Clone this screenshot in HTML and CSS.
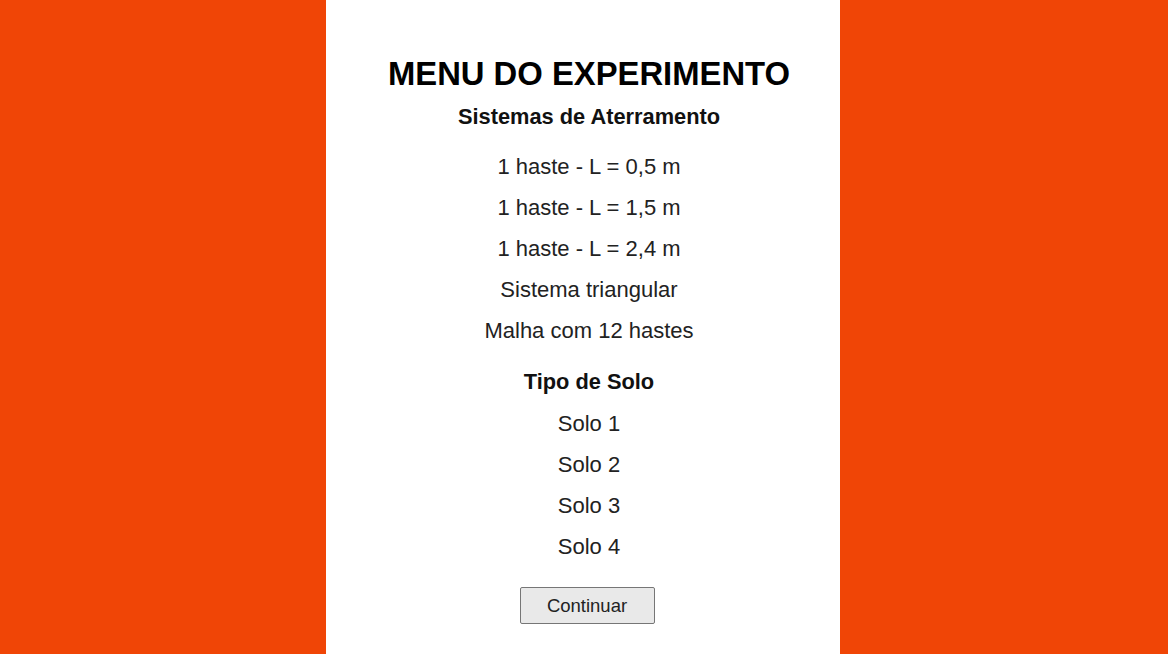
FILE: index.html
```html
<!DOCTYPE html>
<html lang="pt">
<head>
    <meta charset="UTF-8">
    <meta name="viewport" content="width=device-width, initial-scale=1.0">
    <title>Menu do Experimento</title>
    <link rel="stylesheet" href="styles.css">
</head>
<body>
    <div class="menu">
        <h1>MENU DO EXPERIMENTO</h1>
        <h2>Sistemas de Aterramento</h2>
        <ul class="options">
            <li>1 haste - L = 0,5 m</li>
            <li>1 haste - L = 1,5 m</li>
            <li>1 haste - L = 2,4 m</li>
            <li>Sistema triangular</li>
            <li>Malha com 12 hastes</li>
        </ul>
        <h2 class="solo-title">Tipo de Solo</h2>
        <ul class="options solos">
            <li>Solo 1</li>
            <li>Solo 2</li>
            <li>Solo 3</li>
            <li>Solo 4</li>
        </ul>
        <button class="continue">Continuar</button>
    </div>
</body>
</html>
```

FILE: styles.css
```css
body {
    margin: 0;
    background: #f04506;
    font-family: 'Liberation Sans', Arial, sans-serif;
    min-height: 100vh;
}
.menu {
    width: 514px;
    margin-left: calc(50% - 258px);
    background: #fff;
    min-height: 100vh;
    box-sizing: border-box;
    padding-top: 54px;
    padding-left: 12px; /* conteudo levemente deslocado para a direita */
    display: flex;
    flex-direction: column;
    align-items: center;
    text-align: center;
}
h1 {
    margin: 0;
    font-size: 32.8px;
    line-height: 40px;
    color: #000;
}
h2 {
    margin: 11px 0 0;
    font-size: 21.8px;
    line-height: 24px;
    color: #111;
}
.options {
    list-style: none;
    margin: 17px 0 0;
    padding: 0;
}
.options li {
    font-size: 22px;
    line-height: 41px;
    color: #222;
}
h2.solo-title {
    margin-top: 19px;
}
.solos {
    margin-top: 9px;
}
.continue {
    margin-top: 20px;
    margin-right: 4px;
    width: 135px;
    height: 37px;
    font-family: 'Liberation Sans', Arial, sans-serif;
    font-size: 18.5px;
    color: #222;
    background: #e9e9e9;
    border: 1px solid #767676;
    border-radius: 2px;
    cursor: pointer;
}
```
